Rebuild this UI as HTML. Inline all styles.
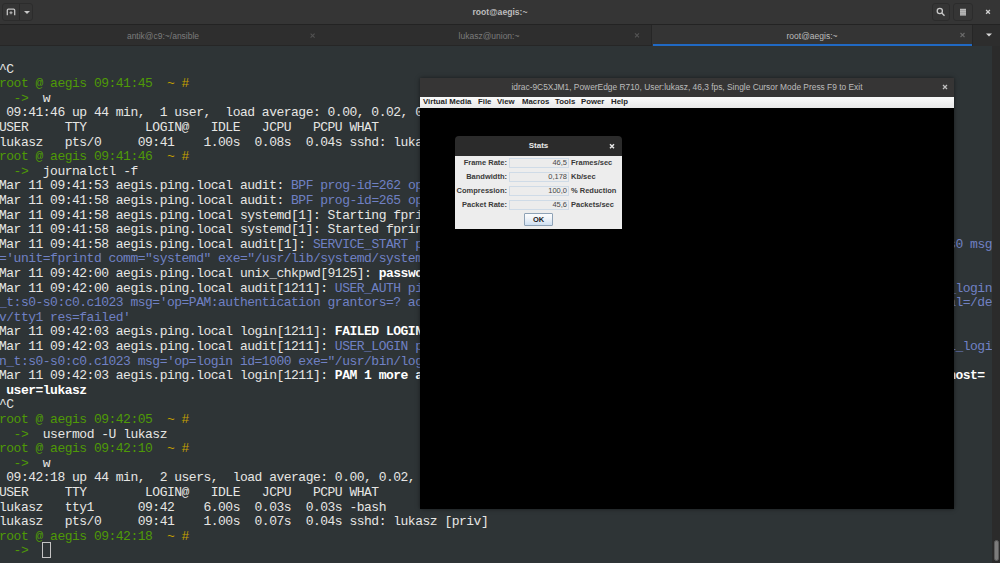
<!DOCTYPE html>
<html><head><meta charset="utf-8">
<style>
*{margin:0;padding:0;box-sizing:border-box}
html,body{width:1000px;height:563px;overflow:hidden;background:#2e3436}
body{position:relative;font-family:"Liberation Sans",sans-serif}
#hdr{position:absolute;left:0;top:0;width:1000px;height:25px;background:#353535;border-bottom:1px solid #232323}
#hdr .title{position:absolute;left:0;width:1000px;top:7px;text-align:center;color:#bdbdbd;font-size:8.6px;font-weight:bold}
.btn{position:absolute;top:3px;height:18px;border:1px solid #2c2c2c;border-radius:3px;background:transparent}
#tabs{position:absolute;left:0;top:25px;width:1000px;height:21px;background:#2e2e2e;border-bottom:1px solid #262626}
.tab{position:absolute;top:0;height:21px;color:#7c7c7c;font-size:8.5px;text-align:center;line-height:22px}
.tab.act{background:#343434;color:#bdbdbd}
.tab .x{position:absolute;top:0;font-size:10px;color:#6a6a6a}
#term{position:absolute;left:-1px;top:0;width:1000px;font-family:"Liberation Mono",monospace;font-size:13px;letter-spacing:-0.5px;line-height:14.6px;color:#e6e6e4;white-space:pre}
#term b{font-weight:bold;color:#ffffff}
#term .cur{font-style:normal}
#cursor{position:absolute;left:42px;top:542px;width:9px;height:16px;border:1px solid #c4c4c4}
#sb{position:absolute;left:992px;top:46px;width:8px;height:517px;background:#2b2b2b}
#idrac{position:absolute;left:420px;top:78px;width:534px;height:431px;background:#000;box-shadow:0 0 4px rgba(0,0,0,.5)}
#idrac .tt{position:absolute;left:0;width:534px;text-align:center}
.cx{position:absolute;top:0;font-weight:normal}
#idrac .tb{position:absolute;left:0;top:0;width:534px;height:19px;background:#363535;border-radius:0;color:#bcbcbc;font-size:8.4px;font-weight:normal;text-align:center;line-height:18px}
#idrac .menu span{position:absolute;top:0}
#idrac .menu{position:absolute;left:0;top:19px;width:534px;height:11px;background:linear-gradient(#fafafa,#e8e8e8);font-size:7.8px;font-weight:bold;color:#262626;line-height:10px;white-space:pre}
#stats{position:absolute;left:455px;top:136px;width:167px;height:93px;background:linear-gradient(transparent 0,transparent 10px,#ededed 10px)}
#stats .tb{position:absolute;left:0;top:0;width:167px;height:20px;background:#2b2b2b;border-radius:4px 4px 0 0;color:#e8e8e8;font-size:8px;font-weight:bold;text-align:center;line-height:20px}
.lbl{position:absolute;font-size:7.5px;font-weight:bold;color:#3a3a3a;line-height:10px;white-space:pre}
.fld{position:absolute;left:54px;width:60px;height:10px;background:#ececec;border:1px solid #cfdbe7;font-size:7.5px;color:#484848;text-align:right;line-height:8px;padding-right:1px}
.ok{position:absolute;left:69px;top:77px;width:29px;height:13px;border:1px solid #8ea2b6;border-radius:1px;background:linear-gradient(#fcfdfe,#f0f4f9 40%,#cfe0f2);font-size:7.5px;font-weight:bold;color:#222;text-align:center;line-height:11px}
</style></head><body>
<pre id="term" style="top:62.7px">^C
<span style="color:#4e9a06">root @ aegis 09:41:45</span>  <span style="color:#c4a000">~ #</span>
  <span style="color:#4e9a06">-&gt;</span>  w
 09:41:46 up 44 min,  1 user,  load average: 0.00, 0.02, 0.00
USER     TTY        LOGIN@   IDLE   JCPU   PCPU WHAT
lukasz   pts/0     09:41    1.00s  0.08s  0.04s sshd: lukasz [priv]
<span style="color:#4e9a06">root @ aegis 09:41:46</span>  <span style="color:#c4a000">~ #</span>
  <span style="color:#4e9a06">-&gt;</span>  journalctl -f
Mar 11 09:41:53 aegis.ping.local audit: <span style="color:#7081c4">BPF prog-id=262 op=LOAD</span>
Mar 11 09:41:58 aegis.ping.local audit: <span style="color:#7081c4">BPF prog-id=265 op=LOAD</span>
Mar 11 09:41:58 aegis.ping.local systemd[1]: Starting fprintd.service - Fingerprint Authentication Daemon...
Mar 11 09:41:58 aegis.ping.local systemd[1]: Started fprintd.service - Fingerprint Authentication Daemon.
Mar 11 09:41:58 aegis.ping.local audit[1]: <span style="color:#7081c4">SERVICE_START pid=1 uid=0 auid=4294967295 ses=4294967295 subj=system_u:system_r:init_t:s0 msg</span>
<span style="color:#7081c4">=&#x27;unit=fprintd comm=&quot;systemd&quot; exe=&quot;/usr/lib/systemd/systemd&quot; hostname=? addr=? terminal=? res=success&#x27;</span>
Mar 11 09:42:00 aegis.ping.local unix_chkpwd[9125]: <b>password check failed for user (lukasz)</b>
Mar 11 09:42:00 aegis.ping.local audit[1211]: <span style="color:#7081c4">USER_AUTH pid=1211 uid=0 auid=4294967295 ses=4294967295 subj=system_u:system_r:local_login</span>
<span style="color:#7081c4">_t:s0-s0:c0.c1023 msg=&#x27;op=PAM:authentication grantors=? acct=&quot;lukasz&quot; exe=&quot;/usr/bin/login&quot; hostname=aegis addr=?            terminal=/de</span>
<span style="color:#7081c4">v/tty1 res=failed&#x27;</span>
Mar 11 09:42:03 aegis.ping.local login[1211]: <b>FAILED LOGIN 1 FROM tty1 FOR lukasz, Authentication failure</b>
Mar 11 09:42:03 aegis.ping.local audit[1211]: <span style="color:#7081c4">USER_LOGIN pid=1211 uid=0 auid=4294967295 ses=4294967295 subj=system_u:system_r:local_logi</span>
<span style="color:#7081c4">n_t:s0-s0:c0.c1023 msg=&#x27;op=login id=1000 exe=&quot;/usr/bin/login&quot; hostname=aegis addr=? terminal=/dev/tty1 res=failed&#x27;</span>
Mar 11 09:42:03 aegis.ping.local login[1211]: <b>PAM 1 more authentication failure; logname=LOGIN uid=0 euid=0 tty=tty1 ruser=      rhost=</b>
<b> user=lukasz</b>
^C
<span style="color:#4e9a06">root @ aegis 09:42:05</span>  <span style="color:#c4a000">~ #</span>
  <span style="color:#4e9a06">-&gt;</span>  usermod -U lukasz
<span style="color:#4e9a06">root @ aegis 09:42:10</span>  <span style="color:#c4a000">~ #</span>
  <span style="color:#4e9a06">-&gt;</span>  w
 09:42:18 up 44 min,  2 users,  load average: 0.00, 0.02, 0.00
USER     TTY        LOGIN@   IDLE   JCPU   PCPU WHAT
lukasz   tty1      09:42    6.00s  0.03s  0.03s -bash
lukasz   pts/0     09:41    1.00s  0.07s  0.04s sshd: lukasz [priv]
<span style="color:#4e9a06">root @ aegis 09:42:18</span>  <span style="color:#c4a000">~ #</span>
  <span style="color:#4e9a06">-&gt;</span>  <i class="cur"> </i></pre>
<div id="cursor"></div>
<div id="hdr">
 <div class="btn" style="left:2px;width:31px"><div style="position:absolute;left:16px;top:0;width:1px;height:16px;background:#2a2a2a"></div></div>
 <svg style="position:absolute;left:0;top:0" width="1000" height="24">
  <path d="M7.3 15.2 V10.2 Q7.3 9.2 8.3 9.2 H13.7 Q14.7 9.2 14.7 10.2 V15.2" fill="none" stroke="#c4c4c4" stroke-width="1.3"/>
  <path d="M11 11.2 V14.2 M9.5 12.7 H12.5" stroke="#bdbdbd" stroke-width="1.1"/>
  <path d="M24 11 L30 11 L27 14 Z" fill="#c8c8c8"/>
  <circle cx="939.8" cy="11" r="2.6" fill="none" stroke="#c8c8c8" stroke-width="1.3"/>
  <path d="M941.8 13 L944.5 15.7" stroke="#c8c8c8" stroke-width="1.4"/>
  <rect x="960" y="8.8" width="6" height="6.4" fill="#9a9a9a"/><path d="M960 9.4 H966 M960 11.3 H966 M960 13.2 H966 M960 15 H966" stroke="#bcbcbc" stroke-width="1"/>
  <path d="M986.1 10 L989.9 13.8 M989.9 10 L986.1 13.8" stroke="#cfcfcf" stroke-width="1.3"/>
 </svg>
 <div class="btn" style="left:932px;width:18px"></div>
 <div class="btn" style="left:953px;width:20px"></div>
 <div class="title">root@aegis:~</div>
</div>
<div id="tabs">
 <div class="tab" style="left:0;width:326px">antik@c9:~/ansible</div>
 <div class="tab" style="left:326px;width:326px">lukasz@union:~</div>
 <div class="tab act" style="left:652px;width:320px">root@aegis:~</div>
 <div style="position:absolute;left:651px;top:0;width:1px;height:21px;background:#262626"></div>
 <div style="position:absolute;left:972px;top:0;width:1px;height:21px;background:#262626"></div>
 <div style="position:absolute;left:973px;top:0;width:27px;height:21px;background:#2d2d2d"></div>
 <div style="position:absolute;left:653px;top:19px;width:319px;height:2px;background:#2069c4"></div>
 <svg style="position:absolute;left:0;top:0" width="1000" height="22">
  <path d="M310.6 8.6 L314.6 12.6 M314.6 8.6 L310.6 12.6" stroke="#515151" stroke-width="1.1"/>
  <path d="M635 8.4 L639 12.4 M639 8.4 L635 12.4" stroke="#545454" stroke-width="1.1"/>
  <path d="M960.5 8 L964.5 12 M964.5 8 L960.5 12" stroke="#6a6a6a" stroke-width="1.1"/>
  <path d="M986 8.5 L992 8.5 L989 11.5 Z" fill="#d8d8d8"/>
 </svg>
</div>
<div id="sb"><div style="position:absolute;left:2px;top:494px;width:5px;height:21px;border-radius:2.5px;background:#7c7c7c;border:1px solid #5c5c5c"></div></div>
<div id="idrac">
 <div class="tb"><span class="tt">idrac-9C5XJM1, PowerEdge R710, User:lukasz, 46,3 fps, Single Cursor Mode Press F9 to Exit</span><svg style="position:absolute;left:520px;top:4px" width="10" height="10"><path d="M3 3 L7 7 M7 3 L3 7" stroke="#c0c0c0" stroke-width="1.25"/></svg></div>
 <div class="menu"><span style="left:3px">Virtual Media</span><span style="left:58px">File</span><span style="left:77px">View</span><span style="left:102px">Macros</span><span style="left:135px">Tools</span><span style="left:161px">Power</span><span style="left:191px">Help</span></div>
</div>
<div id="stats">
 <div class="tb">Stats<svg style="position:absolute;left:152px;top:5px" width="10" height="10"><path d="M3 3.2 L7 7.2 M7 3.2 L3 7.2" stroke="#e6e6e6" stroke-width="1.5"/></svg></div>
 <div class="lbl" style="right:115px;top:22px">Frame Rate:</div>
 <div class="lbl" style="right:115px;top:36px">Bandwidth:</div>
 <div class="lbl" style="right:115px;top:50px">Compression:</div>
 <div class="lbl" style="right:115px;top:64px">Packet Rate:</div>
 <div class="fld" style="top:22px">46,5</div>
 <div class="fld" style="top:36px">0,178</div>
 <div class="fld" style="top:50px">100,0</div>
 <div class="fld" style="top:64px">45,6</div>
 <div class="lbl" style="left:116px;top:22px">Frames/sec</div>
 <div class="lbl" style="left:116px;top:36px">Kb/sec</div>
 <div class="lbl" style="left:116px;top:50px">% Reduction</div>
 <div class="lbl" style="left:116px;top:64px">Packets/sec</div>
 <div class="ok">OK</div>
</div>
</body></html>
